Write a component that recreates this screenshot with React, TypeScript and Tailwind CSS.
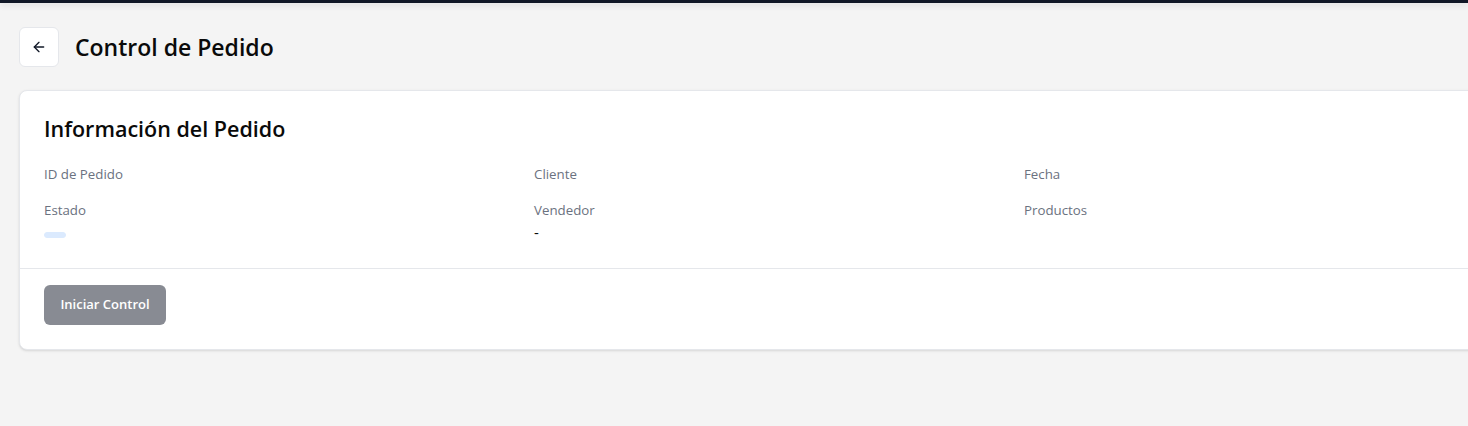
import React from "react";

function ArrowLeft() {
  return (
    <svg width="16" height="16" viewBox="0 0 24 24" fill="none" stroke="currentColor" strokeWidth="2" strokeLinecap="round" strokeLinejoin="round">
      <path d="m12 19-7-7 7-7" />
      <path d="M19 12H5" />
    </svg>
  );
}

function Field({ label, children }: { label: string; children?: React.ReactNode }) {
  return (
    <div className="flex flex-col">
      <span className="text-[13.3px] leading-5 text-[#6b7280]">{label}</span>
      {children}
    </div>
  );
}

export default function App() {
  return (
    <div className="min-h-[426px] w-full overflow-hidden bg-[#f4f4f4]" style={{ fontFamily: '"Open Sans", "Noto Sans", sans-serif' }}>
      <div className="h-[3px] bg-[#111827] shadow-[0_2px_6px_rgba(0,0,0,0.12)]" />
      <div className="pl-[19px] pt-6">
        <div className="flex items-center gap-4">
          <button className="flex h-10 w-10 items-center justify-center rounded-md border border-[#e5e7eb] bg-white text-[#111827]">
            <ArrowLeft />
          </button>
          <h1 className="text-[23px] font-semibold leading-8 text-[#0a0a0a]">Control de Pedido</h1>
        </div>
        <div className="mt-[23px] w-[1496px] rounded-lg border border-[#e5e7eb] bg-white shadow-sm">
          <div className="p-6">
            <h2 className="text-[21.5px] font-semibold leading-7 text-[#0a0a0a]">Información del Pedido</h2>
            <div className="mt-[21px] grid grid-cols-3 gap-x-6 gap-y-4">
              <Field label="ID de Pedido" />
              <Field label="Cliente" />
              <Field label="Fecha" />
              <Field label="Estado">
                <span className="mt-3 inline-flex w-fit rounded-full border border-[#dbeafe] bg-[#dbeafe] px-2.5 py-0.5" />
              </Field>
              <Field label="Vendedor">
                <span className="text-[15px] font-medium leading-6 text-[#0a0a0a]">-</span>
              </Field>
              <Field label="Productos" />
            </div>
          </div>
          <div className="border-t border-[#e5e7eb] px-6 pb-6 pt-4">
            <button className="h-10 w-[122px] rounded-md bg-[#888b93] text-[13px] font-semibold text-white">Iniciar Control</button>
          </div>
        </div>
      </div>
    </div>
  );
}
